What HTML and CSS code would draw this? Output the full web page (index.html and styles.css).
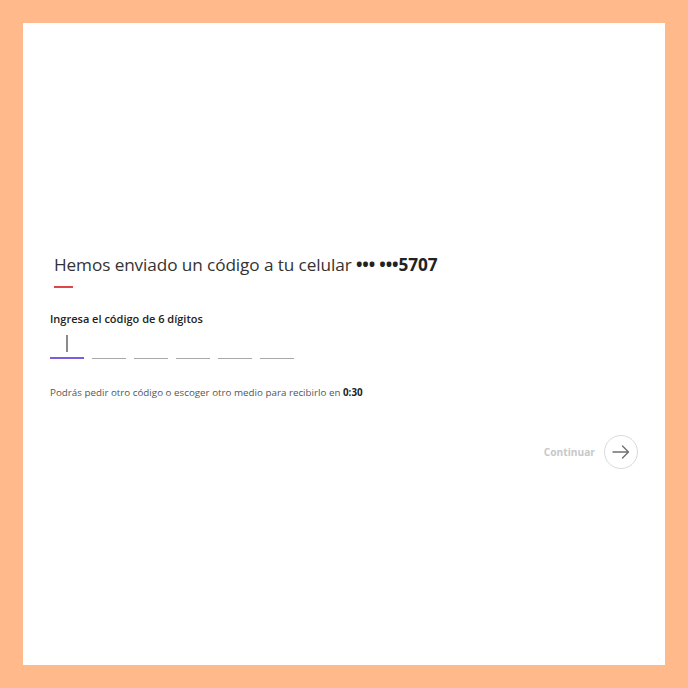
FILE: index.html
```html
<!DOCTYPE html>
<html lang="es">
<head>
<meta charset="utf-8">
<link rel="stylesheet" href="styles.css">
</head>
<body>
<div class="frame">
  <main class="panel">
    <h1 class="title">Hemos enviado un código a tu celular <b>••• •••5707</b></h1>
    <div class="accent"></div>
    <label class="label">Ingresa el código de 6 dígitos</label>
    <div class="code">
      <div class="cell active"><span class="caret"></span></div>
      <div class="cell"></div>
      <div class="cell"></div>
      <div class="cell"></div>
      <div class="cell"></div>
      <div class="cell"></div>
    </div>
    <p class="hint">Podrás pedir otro código o escoger otro medio para recibirlo en <b>0:30</b></p>
    <div class="actions">
      <span class="continue">Continuar</span>
      <span class="circle">
        <svg width="18" height="14" viewBox="0 0 18 14"><path d="M1 7H16.5M10.5 1L16.5 7L10.5 13" fill="none" stroke="#707070" stroke-width="1.4" stroke-linecap="round" stroke-linejoin="round"/></svg>
      </span>
    </div>
  </main>
</div>
</body>
</html>
```
FILE: styles.css
```css
* { box-sizing: border-box; }
html, body { margin: 0; padding: 0; }
body {
  background: #ffb98b;
  font-family: "Open Sans", "Noto Sans", sans-serif;
}
.frame {
  width: 688px;
  height: 688px;
  padding: 23px;
}
.panel {
  background: #fff;
  width: 642px;
  height: 642px;
  padding: 230px 27px 0 27px;
  display: flex;
  flex-direction: column;
}
.title {
  margin: 0 0 0 4px;
  font-size: 17.2px;
  font-weight: 400;
  color: #333;
  line-height: 24px;
  letter-spacing: -0.1px;
  white-space: nowrap;
}
.title b { font-weight: 700; color: #222; }
.accent {
  width: 19px;
  height: 2px;
  background: #e0454a;
  margin: 9px 0 0 4px;
}
.label {
  margin-top: 23px;
  font-size: 11px;
  font-weight: 600;
  color: #222;
  line-height: 16px;
}
.code {
  display: flex;
  gap: 8px;
  margin-top: 8px;
}
.cell {
  width: 34px;
  height: 24px;
  border-bottom: 1px solid #a8a8a8;
  display: flex;
  justify-content: center;
}
.cell.active {
  border-bottom: 2px solid #7d5ce0;
}
.caret {
  width: 2px;
  height: 17px;
  background: #8a8a8a;
}
.hint {
  margin: 27px 0 0 0;
  font-size: 9.8px;
  color: #555;
  line-height: 14px;
}
.hint b { color: #222; font-weight: 700; }
.actions {
  display: flex;
  justify-content: flex-end;
  align-items: center;
  gap: 9px;
  margin-top: 35px;
}
.continue {
  font-size: 10.2px;
  font-weight: 700;
  color: #c8c8c8;
}
.circle {
  width: 34px;
  height: 34px;
  border: 1px solid #dadada;
  border-radius: 50%;
  display: flex;
  align-items: center;
  justify-content: center;
}
```
